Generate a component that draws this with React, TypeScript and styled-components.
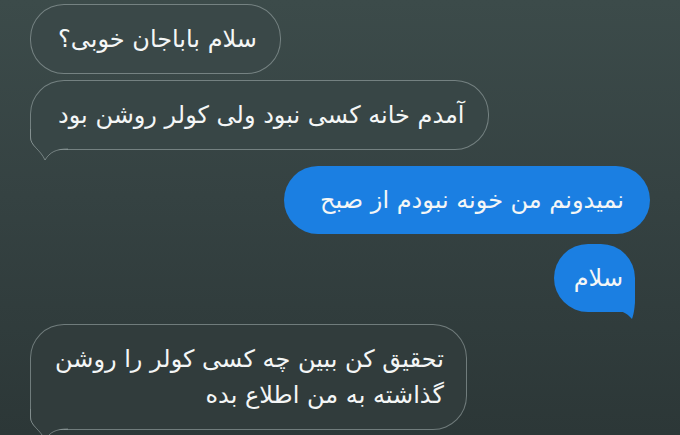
import React from 'react';
import styled, { createGlobalStyle } from 'styled-components';

const GlobalStyle = createGlobalStyle`
  html, body {
    margin: 0;
    padding: 0;
    width: 680px;
    height: 435px;
    overflow: hidden;
  }
  body {
    background: linear-gradient(180deg, #3c4b4a 0%, #354242 45%, #2c3737 100%);
    font-family: "DejaVu Sans", "Noto Sans", sans-serif;
  }
`;

const Thread = styled.div`
  width: 680px;
  height: 435px;
  box-sizing: border-box;
  padding-top: 4px;
  display: flex;
  flex-direction: column;
`;

const Row = styled.div<{ $side: 'left' | 'right'; $edge: number; $gap: number }>`
  display: flex;
  justify-content: ${p => (p.$side === 'left' ? 'flex-start' : 'flex-end')};
  padding-left: ${p => (p.$side === 'left' ? p.$edge : 0)}px;
  padding-right: ${p => (p.$side === 'right' ? p.$edge : 0)}px;
  margin-top: ${p => p.$gap}px;
`;

const Bubble = styled.div<{ $blue?: boolean; $tone?: string; $tail?: boolean; $pad?: string }>`
  position: relative;
  box-sizing: border-box;
  direction: rtl;
  text-align: right;
  padding: ${p => p.$pad || '16px 23px 16px 27px'};
  font-size: 24px;
  line-height: 36px;
  color: #f4f6f6;
  white-space: nowrap;
  border-radius: 34px;
  background: ${p => (p.$blue ? '#1b7fe2' : p.$tone || '#374444')};
  border: ${p => (p.$blue ? 'none' : '1px solid rgba(190, 202, 202, 0.45)')};
  ${p => p.$tail && !p.$blue && 'border-bottom-left-radius: 14px;'}
  ${p => p.$tail && p.$blue && 'border-bottom-right-radius: 12px;'}
`;

const TailBox = styled.svg`
  position: absolute;
  overflow: visible;
`;

const GrayTail = ({ tone }: { tone: string }) => (
  <TailBox width="40" height="32" viewBox="0 0 40 32" style={{ left: -1, bottom: -12 }}>
    <path d="M0.5 0 L0.5 8 C0.5 17 10 20 15 31 C20 23 26 20 38 20 L38 0 Z" fill={tone} />
    <path
      d="M0.5 0 L0.5 8 C0.5 17 10 20 15 31 C20 23 26 20 38 20"
      fill="none"
      stroke="rgba(190, 202, 202, 0.45)"
      strokeWidth="1"
    />
  </TailBox>
);

const BlueTail = () => (
  <TailBox width="30" height="30" viewBox="0 0 30 30" style={{ right: 0, bottom: -9 }}>
    <path d="M0 0 L30 0 L30 6 C30 16 29 22 27 28 C22 22 16 19 6 19 L0 19 Z" fill="#1b7fe2" />
  </TailBox>
);

export default function App() {
  return (
    <>
      <GlobalStyle />
      <Thread>
        <Row $side="left" $edge={30} $gap={0}>
          <Bubble $tone="#3a4848">سلام باباجان خوبی؟</Bubble>
        </Row>
        <Row $side="left" $edge={30} $gap={6}>
          <Bubble $tone="#384646" $tail>
            آمدم خانه کسی نبود ولی کولر روشن بود
            <GrayTail tone="#384646" />
          </Bubble>
        </Row>
        <Row $side="right" $edge={30} $gap={16}>
          <Bubble $blue $pad="16px 26px 16px 36px">نمیدونم من خونه نبودم از صبح</Bubble>
        </Row>
        <Row $side="right" $edge={45} $gap={10}>
          <Bubble $blue $tail $pad="16px 12px 16px 20px">
            سلام
            <BlueTail />
          </Bubble>
        </Row>
        <Row $side="left" $edge={30} $gap={12}>
          <Bubble $tone="#313c3c" $tail $pad="16px 22px 16px 24px">
            تحقیق کن ببین چه کسی کولر را روشن
            <br />
            گذاشته به من اطلاع بده
            <GrayTail tone="#313c3c" />
          </Bubble>
        </Row>
      </Thread>
    </>
  );
}
